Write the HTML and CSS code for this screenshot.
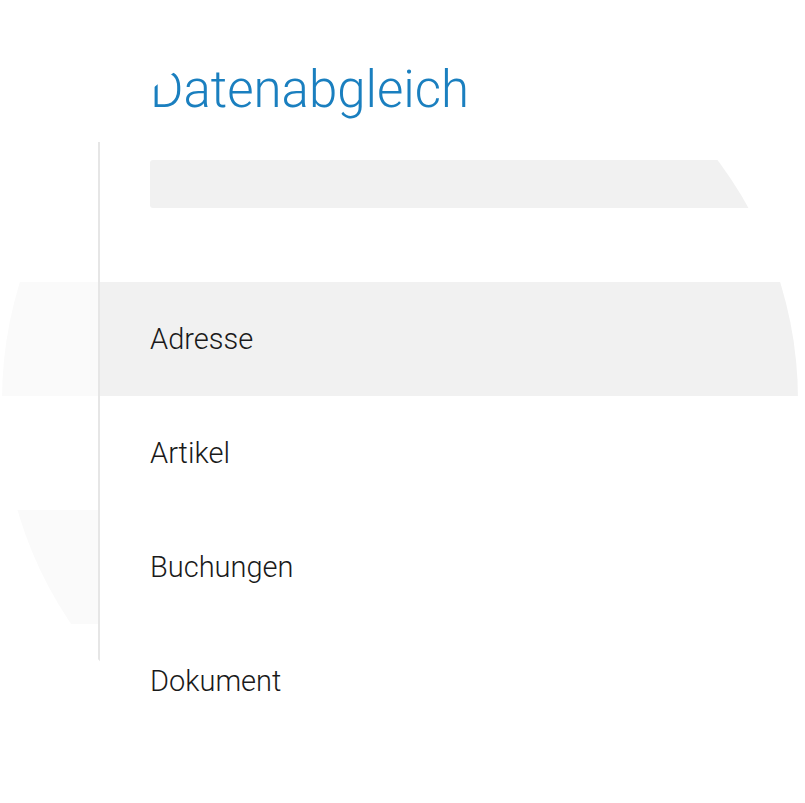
FILE: index.html
```html
<!DOCTYPE html>
<html lang="de">
<head>
  <meta charset="UTF-8" />
  <meta name="viewport" content="width=device-width, initial-scale=1.0" />
  <title>Datenabgleich</title>
  <link rel="stylesheet" href="styles.css">
</head>
<body>
  <div class="screen">
    <header class="kopf">
      <h1>Datenabgleich</h1>
    </header>

    <div class="inhalt">
      <div class="zeile suche-zeile">
        <div class="rand"></div>
        <div class="feld">
          <div class="suche"></div>
        </div>
      </div>

      <div class="zeile eintrag gerade aktiv">
        <div class="rand"></div>
        <div class="feld">Adresse</div>
      </div>
      <div class="zeile eintrag">
        <div class="rand"></div>
        <div class="feld">Artikel</div>
      </div>
      <div class="zeile eintrag gerade">
        <div class="rand"></div>
        <div class="feld">Buchungen</div>
      </div>
      <div class="zeile eintrag">
        <div class="rand"></div>
        <div class="feld">Dokument</div>
      </div>
      <div class="zeile rest">
        <div class="rand"></div>
        <div class="feld"></div>
      </div>
    </div>
  </div>
</body>
</html>
```

FILE: styles.css
```css
body {
  margin: 0;
  background-color: #fff;
  font-family: Roboto, 'Liberation Sans', sans-serif;
  color: #1a1a1a;
}

.screen {
  width: 805px;
  height: 803px;
  overflow: hidden;
  background-color: #fff;
  clip-path: circle(398px at 400px 400px);
  display: flex;
  flex-direction: column;
}

.kopf {
  padding: 64px 0 0 150px;
  height: 78px;
}

.kopf h1 {
  margin: 0;
  font-size: 51px;
  line-height: 51px;
  font-weight: 300;
  color: #1a7fbf;
}

.inhalt {
  flex: 1;
  display: flex;
  flex-direction: column;
}

.zeile {
  display: flex;
}

.rand {
  width: 98px;
  flex-shrink: 0;
  border-right: 2px solid #e6e6e6;
}

.feld {
  flex: 1;
  padding-left: 50px;
}

.suche-zeile {
  height: 140px;
}

.suche-zeile .feld {
  padding-top: 18px;
}

.suche {
  height: 48px;
  margin-right: 20px;
  background-color: #f1f1f1;
  border-radius: 3px;
}

.eintrag {
  height: 114px;
}

.eintrag .feld {
  display: flex;
  align-items: center;
  font-size: 29px;
  font-weight: 300;
}

.eintrag.gerade .rand {
  background-color: #fafafa;
}

.eintrag.aktiv .feld {
  background-color: #f1f1f1;
}

.rest {
  flex: 1;
}
```
